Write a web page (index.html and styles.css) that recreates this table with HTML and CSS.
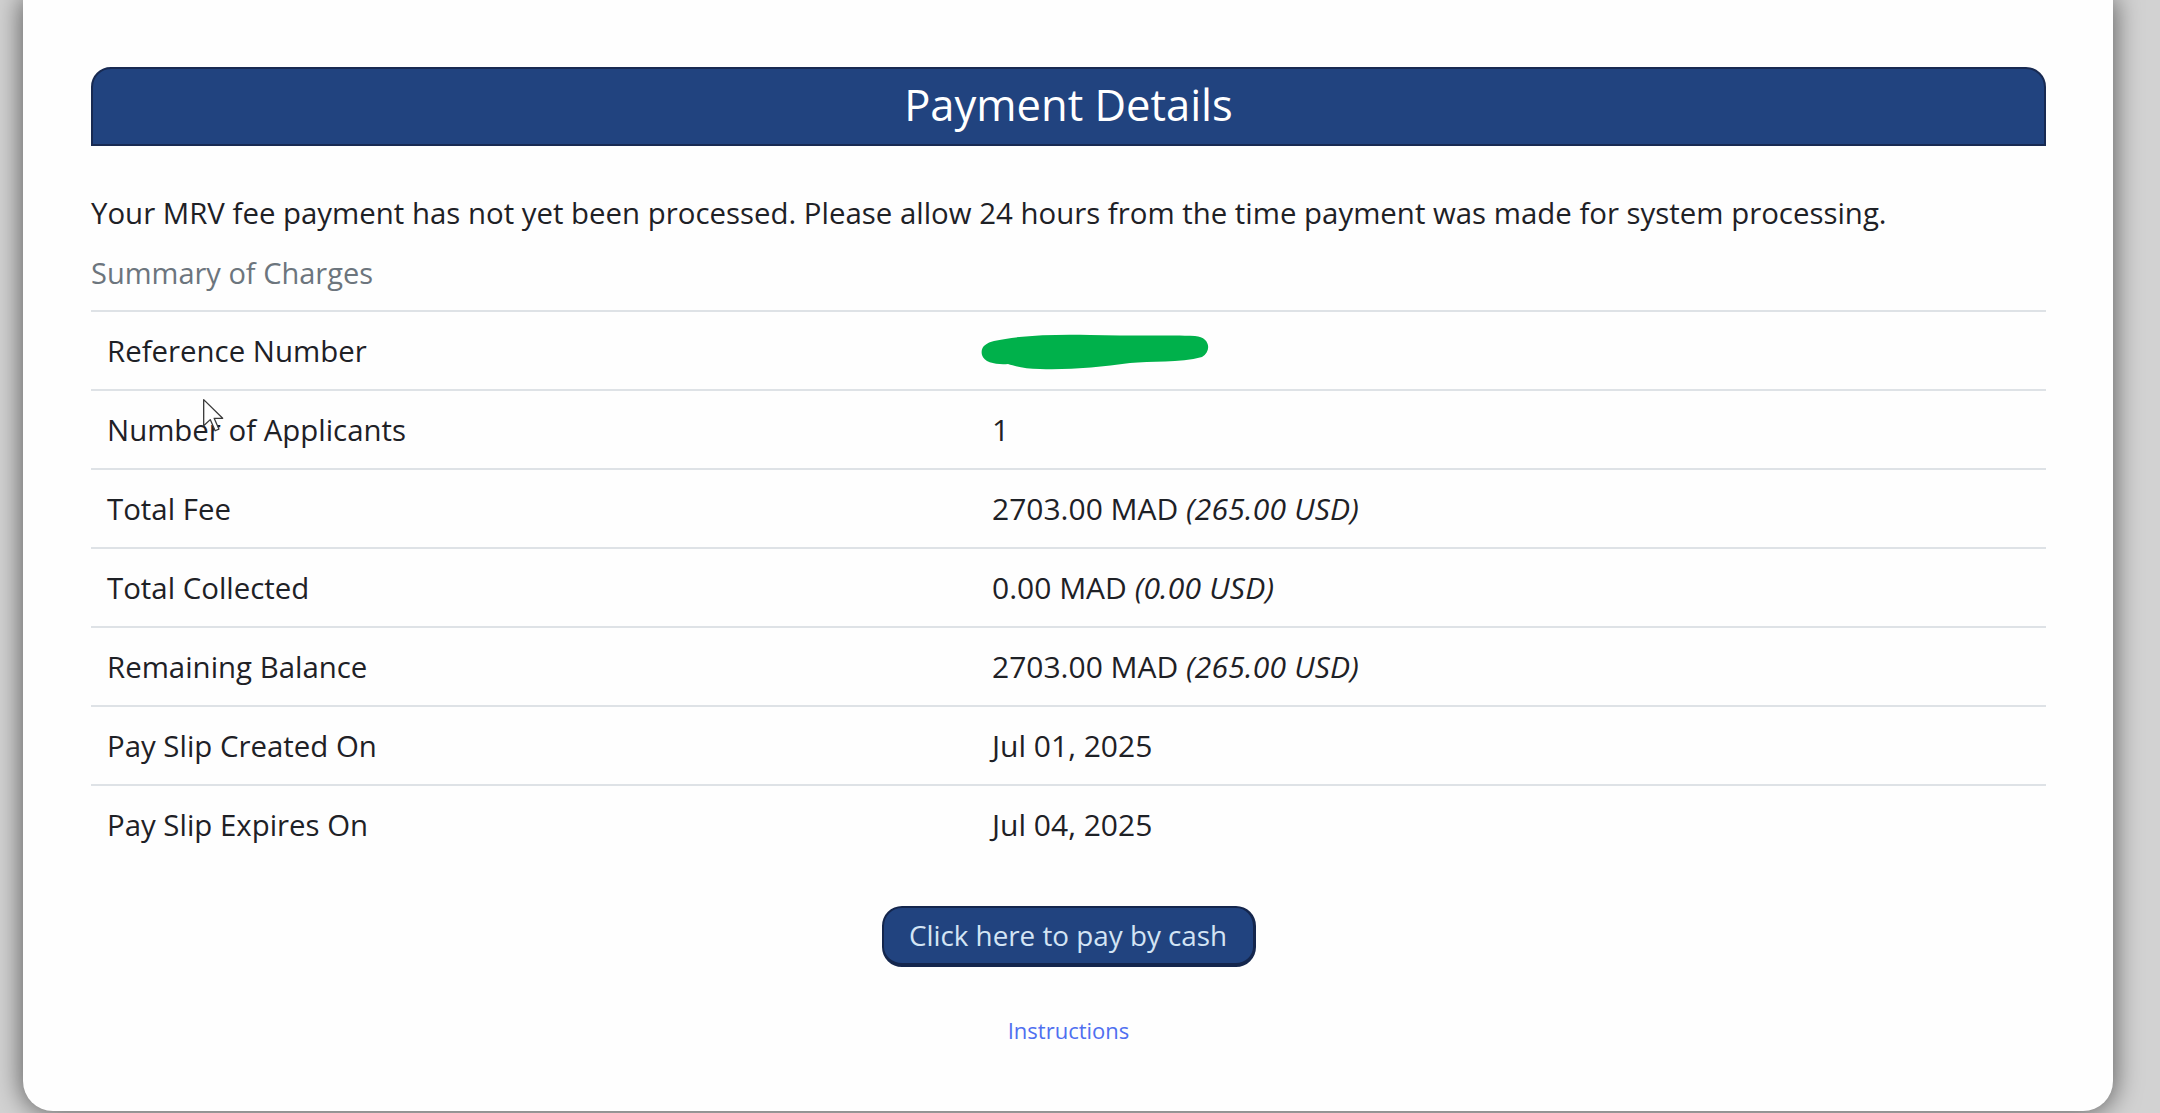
FILE: index.html
```html
<!DOCTYPE html>
<html lang="en">
<head>
<meta charset="utf-8">
<title>Payment Details</title>
<link rel="stylesheet" href="styles.css">
</head>
<body>
<main class="card">
  <header class="panel-head"><h1 class="panel-title">Payment Details</h1></header>
  <p class="notice">Your MRV fee payment has not yet been processed. Please allow 24 hours from the time payment was made for system processing.</p>
  <p class="summary">Summary of Charges</p>
  <div class="charges">
    <div class="row"><div class="label">Reference Number</div><div class="value redacted"><svg class="scribble" viewBox="0 0 232 38" width="232" height="38"><path d="M14 8 C40 2 80 1 110 2 C150 3 190 2 215 3 C230 4 232 18 222 24 C200 30 170 28 150 30 C120 34 90 37 60 36 C45 36 35 33 28 31 C18 32 4 30 2 22 C0 14 6 10 14 8 Z" fill="#00b14b"/></svg></div></div>
    <div class="row"><div class="label">Number of Applicants</div><div class="value">1</div></div>
    <div class="row"><div class="label">Total Fee</div><div class="value">2703.00 MAD <em>(265.00 USD)</em></div></div>
    <div class="row"><div class="label">Total Collected</div><div class="value">0.00 MAD <em>(0.00 USD)</em></div></div>
    <div class="row"><div class="label">Remaining Balance</div><div class="value">2703.00 MAD <em>(265.00 USD)</em></div></div>
    <div class="row"><div class="label">Pay Slip Created On</div><div class="value">Jul 01, 2025</div></div>
    <div class="row"><div class="label">Pay Slip Expires On</div><div class="value">Jul 04, 2025</div></div>
  </div>
  <div class="actions">
    <button class="pay-btn" type="button">Click here to pay by cash</button>
    <a class="instructions" href="#">Instructions</a>
  </div>
  <svg class="cursor" viewBox="0 0 14 22" width="23" height="36"><path d="M1 1 L1 17 L5 13.2 L8 20 L10.3 19 L7.4 12.4 L12.6 12.4 Z" fill="#ffffff" stroke="#3a3a3a" stroke-width="0.8" stroke-linejoin="round"/></svg>
</main>
</body>
</html>
```

FILE: styles.css
```css
* { box-sizing: border-box; }
html, body { margin: 0; padding: 0; }
body {
  width: 2160px;
  height: 1113px;
  overflow: hidden;
  background: #d2d2d2;
  font-family: "Open Sans", "Noto Sans", sans-serif;
  color: #212529;
}
.card {
  position: relative;
  width: 2090px;
  height: 1111px;
  margin-left: 23px;
  background: #fefefe;
  border-radius: 0 0 30px 30px;
  box-shadow: 0 0 26px 2px rgba(0, 0, 0, 0.55);
  padding: 67px 67px 0 68px;
  display: flex;
  flex-direction: column;
}
.panel-head {
  height: 79px;
  background: #21437f;
  border: 2px solid #182a52;
  border-radius: 20px 20px 0 0;
  display: flex;
  align-items: center;
  justify-content: center;
}
.panel-title {
  margin: 0;
  font-weight: 400;
  font-size: 43.5px;
  line-height: 1;
  color: #ffffff;
  padding-bottom: 4px;
}
.notice {
  margin: 43px 0 0;
  font-size: 29.4px;
  line-height: 48px;
  color: #1e2126;
}
.summary {
  margin: 12px 0 0;
  font-size: 29px;
  line-height: 48px;
  color: #6c757d;
}
.charges {
  margin-top: 13px;
  display: flex;
  flex-direction: column;
}
.row {
  display: grid;
  grid-template-columns: 885px 1fr;
  height: 79px;
  border-top: 2px solid #dee2e6;
  align-items: center;
  font-size: 30px;
  color: #1e2126;
}
.label { padding-left: 16px; font-size: 29.4px; }
.value { padding-left: 16px; position: relative; }
.value em { font-style: italic; letter-spacing: 0.2px; }
.scribble {
  position: absolute;
  left: 4px;
  top: -18px;
}
.actions {
  display: flex;
  flex-direction: column;
  align-items: center;
  margin-top: 43px;
}
.pay-btn {
  width: 374px;
  height: 61px;
  background: #21437f;
  color: #d3e4f4;
  font-family: "Open Sans", "Noto Sans", sans-serif;
  font-size: 27.8px;
  border: 2px solid #14264d;
  border-right-width: 3px;
  border-bottom-width: 4px;
  border-radius: 20px;
  padding: 0;
  line-height: 1;
}
.instructions {
  margin-top: 45px;
  font-size: 22px;
  line-height: 36px;
  color: #4f6ff0;
  text-decoration: none;
}
.cursor {
  position: absolute;
  left: 179px;
  top: 398px;
}
```
